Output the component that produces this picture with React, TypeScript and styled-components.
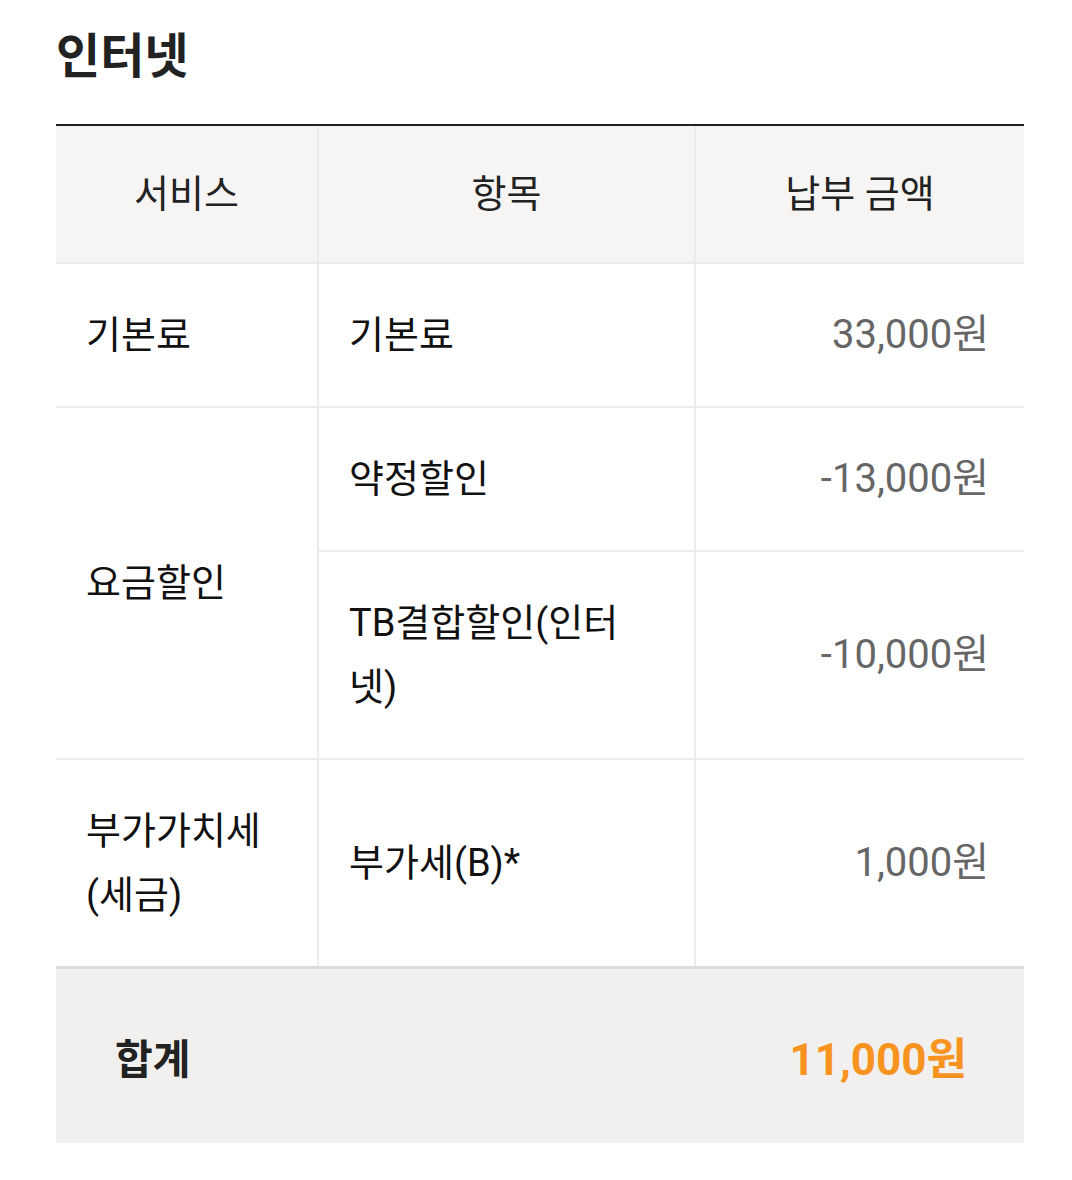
import React from 'react';
import styled, { createGlobalStyle } from 'styled-components';

const GlobalStyle = createGlobalStyle`
  body {
    margin: 0;
    background: #ffffff;
    font-family: Roboto, 'Noto Sans CJK KR', sans-serif;
    color: #111111;
  }
`;

const Page = styled.div`
  padding: 0 48px 0 56px;
`;

const Title = styled.h1`
  margin: 0;
  padding: 26px 0 36px;
  font-size: 48px;
  line-height: 62px;
  font-weight: 700;
  color: #222222;
`;

const TableWrap = styled.div`
  width: 968px;
  border-top: 2px solid #222222;
`;

const Table = styled.table`
  width: 100%;
  border-collapse: collapse;
  table-layout: fixed;
`;

const HeadCell = styled.th`
  background: #f6f5f3;
  font-size: 38px;
  font-weight: 400;
  line-height: 64px;
  padding: 36px 20px;
  color: #222222;
  text-align: center;
  border: 2px solid #ecebea;
  border-top: none;
  &:first-child { border-left: none; }
  &:last-child { border-right: none; }
`;

const Cell = styled.td<{ $align?: 'left' | 'right'; $muted?: boolean }>`
  font-size: 38px;
  line-height: 64px;
  padding: 39px ${(p) => (p.$align === 'right' ? '35px' : '30px')};
  text-align: ${(p) => p.$align ?? 'left'};
  color: ${(p) => (p.$muted ? '#666666' : '#111111')};
  border: 2px solid #ecebea;
  vertical-align: middle;
  &:first-child { border-left: none; }
  &:last-child { border-right: none; }
`;

const Amount = styled.span`
  font-size: 40px;
`;

const TotalRow = styled.tr`
  background: #f1f0ef;
  border-top: 3px solid #dcdbda;
`;

const TotalLabel = styled.td`
  height: 174px;
  padding: 0 0 0 59px;
  font-size: 41px;
  font-weight: 700;
  color: #222222;
`;

const TotalAmount = styled.td`
  padding: 0 57px 0 0;
  text-align: right;
  font-size: 44px;
  font-weight: 700;
  color: #f7931e;
`;

type Line = { item: string; amount: string };
type Group = { service: string; lines: Line[] };

const groups: Group[] = [
  { service: '기본료', lines: [{ item: '기본료', amount: '33,000원' }] },
  {
    service: '요금할인',
    lines: [
      { item: '약정할인', amount: '-13,000원' },
      { item: 'TB결합할인(인터넷)', amount: '-10,000원' },
    ],
  },
  { service: '부가가치세(세금)', lines: [{ item: '부가세(B)*', amount: '1,000원' }] },
];

export default function App() {
  return (
    <Page>
      <GlobalStyle />
      <Title>인터넷</Title>
      <TableWrap>
        <Table>
          <colgroup>
            <col style={{ width: 262 }} />
            <col style={{ width: 377 }} />
            <col style={{ width: 329 }} />
          </colgroup>
          <thead>
            <tr>
              <HeadCell>서비스</HeadCell>
              <HeadCell>항목</HeadCell>
              <HeadCell>납부 금액</HeadCell>
            </tr>
          </thead>
          <tbody>
            {groups.map((g) =>
              g.lines.map((line, i) => (
                <tr key={g.service + i}>
                  {i === 0 && <Cell rowSpan={g.lines.length}>{g.service}</Cell>}
                  <Cell>{line.item}</Cell>
                  <Cell $align="right" $muted>
                    <Amount>{line.amount}</Amount>
                  </Cell>
                </tr>
              )),
            )}
          </tbody>
          <tfoot>
            <TotalRow>
              <TotalLabel colSpan={2}>합계</TotalLabel>
              <TotalAmount>11,000원</TotalAmount>
            </TotalRow>
          </tfoot>
        </Table>
      </TableWrap>
    </Page>
  );
}
